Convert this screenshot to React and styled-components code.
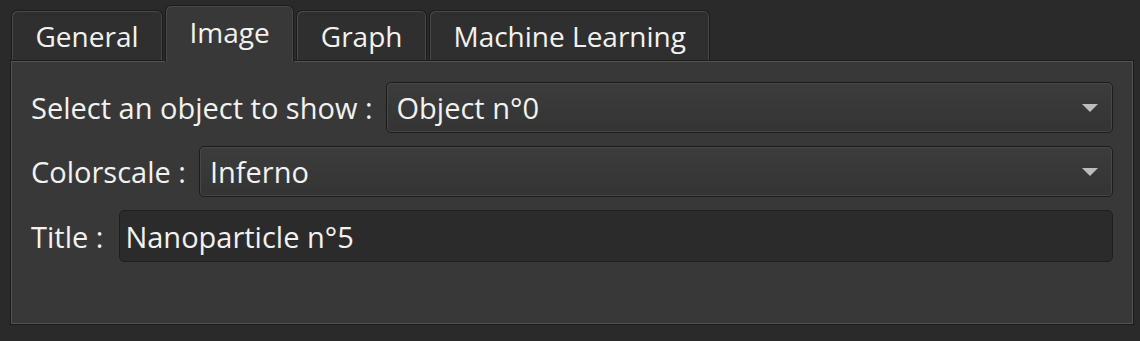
import React from "react";
import styled, { createGlobalStyle } from "styled-components";

const Global = createGlobalStyle`
  html, body { margin: 0; padding: 0; background: #2a2a2a; }
  body { font-family: "Open Sans", "Noto Sans", sans-serif; color: #f2f2f2; }
`;

const Window = styled.div`
  width: 1140px;
  height: 341px;
  box-sizing: border-box;
  padding: 5px 6px 0 10px;
  background: #2a2a2a;
`;

const TabBar = styled.div`
  display: flex;
  align-items: flex-end;
  gap: 2px;
  height: 55px;
  padding-left: 1px;
  position: relative;
  z-index: 2;
`;

const Tab = styled.div`
  box-sizing: border-box;
  height: ${(p) => (p.$active ? 57 : 50)}px;
  margin-bottom: ${(p) => (p.$active ? -2 : 0)}px;
  padding: ${(p) => (p.$active ? "0 23.5px 4px" : "0 23.5px")};
  display: flex;
  align-items: center;
  font-size: 28px;
  color: #f2f2f2;
  background: ${(p) => (p.$active ? "#383838" : "#2f2f2f")};
  border: 1px solid #1c1c1c;
  border-bottom: none;
  border-radius: 6px 6px 0 0;
  box-shadow: inset 1px 1px 0 #484848, inset -1px 0 0 #484848;
  white-space: nowrap;
`;

const Panel = styled.div`
  box-sizing: border-box;
  width: 1124px;
  height: 265px;
  background: #383838;
  border: 1px solid #1c1c1c;
  box-shadow: inset 0 0 0 1px #525252;
  padding: 21px 20px;
  display: flex;
  flex-direction: column;
  gap: 13px;
  position: relative;
  z-index: 1;
`;

const Row = styled.div`
  display: flex;
  align-items: center;
  gap: ${(p) => p.$gap || 13}px;
`;

const Label = styled.span`
  font-size: 29px;
  color: #f2f2f2;
  white-space: nowrap;
`;

const Combo = styled.div`
  flex: 1;
  box-sizing: border-box;
  height: 51px;
  display: flex;
  align-items: center;
  justify-content: space-between;
  padding: 0 14px 0 10px;
  font-size: 29px;
  color: #f2f2f2;
  border: 1px solid #1c1c1c;
  border-radius: 5px;
  background: linear-gradient(#3c3c3c, #343434);
  box-shadow: inset 0 0 0 1px #474747;
`;

const LineEdit = styled.div`
  flex: 1;
  box-sizing: border-box;
  height: 52px;
  display: flex;
  align-items: center;
  padding: 0 5px;
  font-size: 29px;
  color: #f2f2f2;
  border: 1px solid #1f1f1f;
  border-radius: 5px;
  background: #2b2b2b;
`;

const Arrow = () => (
  <svg width="16" height="8" viewBox="0 0 16 8">
    <polygon points="0,0 16,0 8,8" fill="#bdbdbd" />
  </svg>
);

export default function App() {
  const tabs = ["General", "Image", "Graph", "Machine Learning"];
  return (
    <>
      <Global />
      <Window>
        <TabBar>
          {tabs.map((t) => (
            <Tab key={t} $active={t === "Image"}>
              {t}
            </Tab>
          ))}
        </TabBar>
        <Panel>
          <Row>
            <Label>Select an object to show :</Label>
            <Combo>
              <span>Object n°0</span>
              <Arrow />
            </Combo>
          </Row>
          <Row>
            <Label>Colorscale :</Label>
            <Combo>
              <span>Inferno</span>
              <Arrow />
            </Combo>
          </Row>
          <Row $gap={16}>
            <Label>Title :</Label>
            <LineEdit>Nanoparticle n°5</LineEdit>
          </Row>
        </Panel>
      </Window>
    </>
  );
}
